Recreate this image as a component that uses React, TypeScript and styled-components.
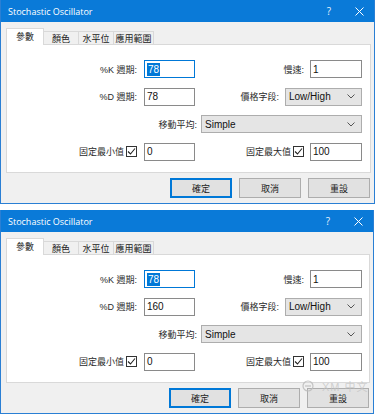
import styled, { createGlobalStyle } from "styled-components";

const GlobalStyle = createGlobalStyle`
  html, body {
    margin: 0;
    padding: 0;
    background: #fff;
  }
  body {
    font-family: "Liberation Sans", "Noto Sans CJK TC", sans-serif;
    color: #1a1a1a;
  }
  * {
    box-sizing: border-box;
  }
`;

const Page = styled.div`
  position: relative;
  width: 378px;
  height: 415px;
  display: flex;
  flex-direction: column;
  gap: 6px;
  overflow: hidden;
`;

const Dialog = styled.div<{ $width: number }>`
  width: ${(p) => p.$width}px;
  border: 1px solid #2a7fd4;
  border-top: none;
  background: #f0f0f0;
  display: flex;
  flex-direction: column;
`;

const TitleBar = styled.div`
  height: 22px;
  background: #0a7ad8;
  color: #fff;
  display: flex;
  align-items: center;
  padding-left: 7px;
  font-family: "Open Sans", "Liberation Sans", sans-serif;
  font-size: 9px;
`;

const Title = styled.span`
  flex: 1;
`;

const TitleIcon = styled.span`
  width: 30px;
  display: flex;
  justify-content: center;
  font-size: 10px;
  color: #e8f2fc;
`;

const Body = styled.div`
  padding: 6px 3px 5px 5px;
  display: flex;
  flex-direction: column;
`;

const TabStrip = styled.div`
  display: flex;
  align-items: flex-end;
  height: 17px;
  margin-bottom: -1px;
  position: relative;
  z-index: 1;
`;

const Tab = styled.div<{ $active?: boolean; $width: number }>`
  width: ${(p) => p.$width}px;
  height: ${(p) => (p.$active ? 17 : 14)}px;
  display: flex;
  align-items: center;
  justify-content: center;
  font-family: "Noto Sans CJK TC", sans-serif;
  font-size: 9px;
  color: #222;
  background: ${(p) => (p.$active ? "#fff" : "#f0f0f0")};
  border: 1px solid #d9d9d9;
  border-bottom: ${(p) => (p.$active ? "none" : "1px solid #d9d9d9")};
  border-left: ${(p) => (p.$active ? "1px solid #d9d9d9" : "none")};
  padding-bottom: ${(p) => (p.$active ? 2 : 0)}px;
`;

const TabRest = styled.div`
  flex: 1;
  height: 1px;
  background: #d9d9d9;
`;

const Panel = styled.div`
  height: 129px;
  background: #fff;
  border: 1px solid #d9d9d9;
  display: grid;
  grid-template-columns: 188px 167px;
  grid-template-rows: repeat(4, 18px);
  row-gap: 9.5px;
  padding-top: 15px;
  align-content: start;
`;

const Cell = styled.div<{ $gap?: number; $span?: boolean }>`
  display: flex;
  justify-content: flex-end;
  align-items: center;
  gap: ${(p) => p.$gap ?? 6}px;
  grid-column: ${(p) => (p.$span ? "1 / -1" : "auto")};
`;

const Label = styled.span`
  font-family: "Liberation Sans", "Noto Sans CJK TC", sans-serif;
  font-size: 9px;
  color: #2a2a2a;
  white-space: nowrap;
`;

const CheckLabel = styled.span`
  display: flex;
  align-items: center;
  gap: 2px;
`;

const Box = styled.span`
  width: 11px;
  height: 11px;
  border: 1px solid #333;
  background: #fff;
  display: flex;
  align-items: center;
  justify-content: center;
`;

const Input = styled.div<{ $width: number; $focused?: boolean }>`
  width: ${(p) => p.$width}px;
  height: 18px;
  background: #fff;
  border: 1px solid ${(p) => (p.$focused ? "#0078d7" : "#8a8a8a")};
  display: flex;
  align-items: center;
  padding-left: 2px;
  font-size: 10px;
  color: #111;
`;

const Selected = styled.span`
  background: #0078d7;
  color: #fff;
  padding: 1px 1px;
`;

const Select = styled.div<{ $width: number }>`
  width: ${(p) => p.$width}px;
  height: 18px;
  background: #e5e5e5;
  border: 1px solid #adadad;
  display: flex;
  align-items: center;
  justify-content: space-between;
  padding: 0 6px 0 3px;
  font-size: 10px;
  color: #111;
`;

const ButtonRow = styled.div`
  display: flex;
  justify-content: flex-end;
  gap: 7px;
  margin-top: 5px;
  padding-right: 1px;
`;

const Button = styled.div<{ $default?: boolean }>`
  width: 62px;
  height: 20px;
  background: #e1e1e1;
  border: 1px solid ${(p) => (p.$default ? "#0078d7" : "#adadad")};
  box-shadow: ${(p) => (p.$default ? "inset 0 0 0 1px #0078d7" : "none")};
  display: flex;
  align-items: center;
  justify-content: center;
  font-family: "Noto Sans CJK TC", sans-serif;
  font-size: 9px;
  color: #222;
`;

const Watermark = styled.div`
  position: absolute;
  left: 302px;
  top: 378px;
  display: flex;
  align-items: center;
  gap: 8px;
  color: rgba(195, 195, 195, 0.75);
  font-family: "Liberation Sans", "Noto Sans CJK TC", sans-serif;
  font-size: 11px;
  letter-spacing: 1px;
  pointer-events: none;
`;

function Chevron() {
  return (
    <svg width="8" height="5" viewBox="0 0 8 5">
      <path d="M0.5 0.5 L4 4 L7.5 0.5" fill="none" stroke="#555" strokeWidth="1" />
    </svg>
  );
}

function Check() {
  return (
    <svg width="9" height="9" viewBox="0 0 9 9">
      <path d="M1 4.5 L3.5 7 L8 1.5" fill="none" stroke="#222" strokeWidth="1.1" />
    </svg>
  );
}

function StochDialog({ width, dValue }: { width: number; dValue: string }) {
  return (
    <Dialog $width={width}>
      <TitleBar>
        <Title>Stochastic Oscillator</Title>
        <TitleIcon>?</TitleIcon>
        <TitleIcon>
          <svg width="9" height="9" viewBox="0 0 9 9">
            <path d="M0.5 0.5 L8.5 8.5 M8.5 0.5 L0.5 8.5" stroke="#fff" strokeWidth="1" />
          </svg>
        </TitleIcon>
      </TitleBar>
      <Body>
        <TabStrip>
          <Tab $active $width={38}>參數</Tab>
          <Tab $width={35}>顏色</Tab>
          <Tab $width={35}>水平位</Tab>
          <Tab $width={40}>應用範圍</Tab>
          <TabRest />
        </TabStrip>
        <Panel>
          <Cell $gap={7}>
            <Label>%K 週期:</Label>
            <Input $width={51} $focused>
              <Selected>78</Selected>
            </Input>
          </Cell>
          <Cell>
            <Label>慢速:</Label>
            <Input $width={52}>1</Input>
          </Cell>
          <Cell $gap={7}>
            <Label>%D 週期:</Label>
            <Input $width={51}>{dValue}</Input>
          </Cell>
          <Cell>
            <Label>價格字段:</Label>
            <Select $width={77}>
              Low/High
              <Chevron />
            </Select>
          </Cell>
          <Cell $span $gap={4}>
            <Label>移動平均:</Label>
            <Select $width={161}>
              Simple
              <Chevron />
            </Select>
          </Cell>
          <Cell $gap={7}>
            <CheckLabel>
              <Label>固定最小值</Label>
              <Box>
                <Check />
              </Box>
            </CheckLabel>
            <Input $width={51}>0</Input>
          </Cell>
          <Cell>
            <CheckLabel>
              <Label>固定最大值</Label>
              <Box>
                <Check />
              </Box>
            </CheckLabel>
            <Input $width={52}>100</Input>
          </Cell>
        </Panel>
        <ButtonRow>
          <Button $default>確定</Button>
          <Button>取消</Button>
          <Button>重設</Button>
        </ButtonRow>
      </Body>
    </Dialog>
  );
}

export default function App() {
  return (
    <>
      <GlobalStyle />
      <Page>
        <StochDialog width={375} dValue="78" />
        <StochDialog width={374} dValue="160" />
        <Watermark>
          <svg width="12" height="12" viewBox="0 0 12 12">
            <circle cx="6" cy="6" r="5" fill="none" stroke="rgba(190,190,190,0.9)" strokeWidth="1.2" />
            <path d="M3 6 L9 6" stroke="rgba(190,190,190,0.9)" strokeWidth="1.2" />
          </svg>
          <span>XM 中文</span>
        </Watermark>
      </Page>
    </>
  );
}
